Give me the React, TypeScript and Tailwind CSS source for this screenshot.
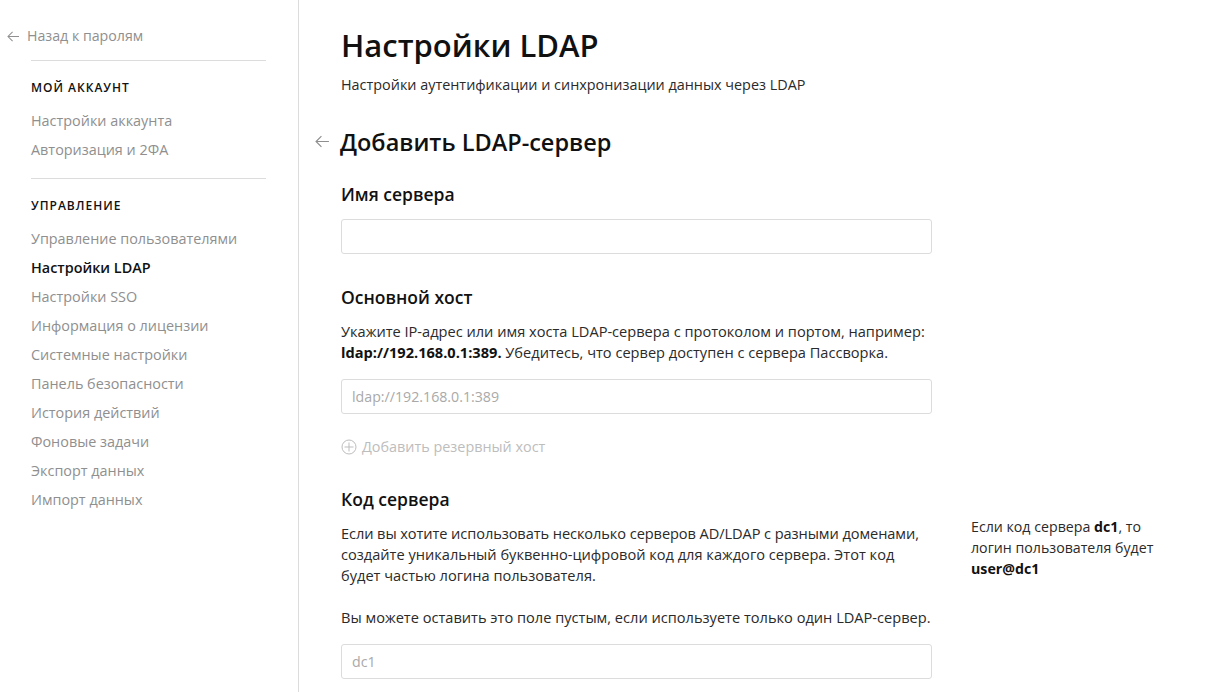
import React from "react";

const font = { fontFamily: '"Open Sans", "Noto Sans", sans-serif' };

function Arrow({ className }: { className: string }) {
  return (
    <svg viewBox="0 0 14 12" className={className} fill="none" stroke="currentColor" strokeWidth="1.1">
      <path d="M13 6H1.2M6 1 1 6l5 5" />
    </svg>
  );
}

function Field({ placeholder }: { placeholder?: string }) {
  return (
    <div className="h-[35px] w-[591px] rounded-[3px] border border-[#dcdcdc] bg-white px-[10px] text-[14.2px] leading-[33px] text-[#a9a9a9]">
      {placeholder}
    </div>
  );
}

function Label({ children }: { children: React.ReactNode }) {
  return <h3 className="text-[17.5px] font-semibold leading-[24px] text-[#111111]">{children}</h3>;
}

const account = ["Настройки аккаунта", "Авторизация и 2ФА"];
const manage = [
  "Управление пользователями",
  "Настройки LDAP",
  "Настройки SSO",
  "Информация о лицензии",
  "Системные настройки",
  "Панель безопасности",
  "История действий",
  "Фоновые задачи",
  "Экспорт данных",
  "Импорт данных",
];

function NavItem({ label }: { label: string }) {
  const active = label === "Настройки LDAP";
  return (
    <div className={active ? "h-[29px] text-[14.4px] font-semibold leading-[29px] text-[#111111]" : "h-[29px] text-[14.4px] leading-[29px] text-[#8f8f8f]"}>
      {label}
    </div>
  );
}

export default function App() {
  return (
    <div style={font} className="flex h-[692px] w-[1211px] overflow-hidden bg-white">
      <aside className="h-full w-[299px] shrink-0 border-r border-[#dcdcdc] pt-[25px]">
        <div className="flex h-[22px] items-center pl-[7px] text-[14.2px] text-[#8f8f8f]">
          <Arrow className="mr-[7px] h-[11px] w-[13px]" />
          Назад к паролям
        </div>
        <div className="ml-[31px] w-[235px]">
          <div className="mt-[13px] border-t border-[#dcdcdc] pt-[19px]">
            <h4 className="text-[12px] font-semibold uppercase leading-[16px] tracking-[1px] text-[#111111]">Мой аккаунт</h4>
            <div className="mt-[10px]">
              {account.map((a) => (
                <NavItem key={a} label={a} />
              ))}
            </div>
          </div>
          <div className="mt-[14px] border-t border-[#dcdcdc] pt-[19px]">
            <h4 className="text-[12px] font-semibold uppercase leading-[16px] tracking-[1px] text-[#111111]">Управление</h4>
            <div className="mt-[10px]">
              {manage.map((a) => (
                <NavItem key={a} label={a} />
              ))}
            </div>
          </div>
        </div>
      </aside>
      <main className="min-w-0 flex-1 pl-[42px] pt-[23px]">
        <h1 className="text-[31px] font-semibold leading-[44px] text-[#111111]">Настройки LDAP</h1>
        <p className="mt-[7px] text-[14.4px] leading-[21px] text-[#2a2a2a]">
          Настройки аутентификации и синхронизации данных через LDAP
        </p>
        <div className="relative mt-[30px] h-[34px] text-[23.5px] font-semibold leading-[34px] text-[#111111]">
          <Arrow className="absolute left-[-26px] top-[10px] h-[13px] w-[15px] text-[#8f8f8f]" />
          <h2 className="ml-[-1px]">Добавить LDAP-сервер</h2>
        </div>
        <div className="mt-[23px]">
          <Label>Имя сервера</Label>
          <div className="mt-[13px]">
            <Field />
          </div>
        </div>
        <div className="mt-[31px]">
          <Label>Основной хост</Label>
          <p className="mt-[12px] w-[620px] text-[14.6px] leading-[21px] text-[#2a2a2a]">
            Укажите IP-адрес или имя хоста LDAP-сервера с протоколом и портом, например:
            <br />
            <b className="font-bold text-[#111111]">ldap://192.168.0.1:389.</b> Убедитесь, что сервер доступен с сервера Пассворка.
          </p>
          <div className="mt-[16px]">
            <Field placeholder="ldap://192.168.0.1:389" />
          </div>
          <div className="mt-[22px] flex h-[22px] items-center text-[14.4px] text-[#bdbdbd]">
            <svg viewBox="0 0 16 16" className="mr-[5px] h-[16px] w-[16px]" fill="none" stroke="currentColor" strokeWidth="1">
              <circle cx="8" cy="8" r="7" />
              <path d="M8 3.5v9M3.5 8h9" />
            </svg>
            Добавить резервный хост
          </div>
        </div>
        <div className="mt-[29px] flex">
          <div className="w-[630px] shrink-0">
            <Label>Код сервера</Label>
            <p className="mt-[12px] text-[14.6px] leading-[21px] text-[#2a2a2a]">
              <span className="tracking-[-0.08px]">Если вы хотите использовать несколько серверов AD/LDAP с разными доменами,</span>
              <br />
              создайте уникальный буквенно-цифровой код для каждого сервера. Этот код
              <br />
              будет частью логина пользователя.
            </p>
            <p className="mt-[21px] whitespace-nowrap text-[14.6px] leading-[21px] text-[#2a2a2a]">
              Вы можете оставить это поле пустым, если используете только один LDAP-сервер.
            </p>
            <div className="mt-[16px]">
              <Field placeholder="dc1" />
            </div>
          </div>
          <p className="mt-[29px] w-[200px] text-[14.2px] leading-[21px] text-[#2a2a2a]">
            Если код сервера <b className="font-bold text-[#111111]">dc1</b>, то
            <br />
            логин пользователя будет
            <br />
            <b className="font-bold text-[#111111]">user@dc1</b>
          </p>
        </div>
      </main>
    </div>
  );
}
